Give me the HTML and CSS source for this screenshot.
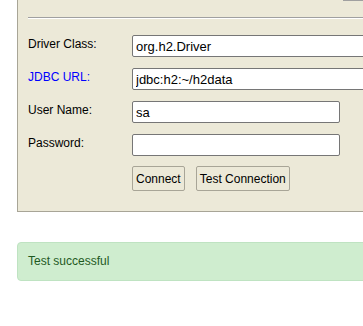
FILE: index.html
```html
<!DOCTYPE html>
<html lang="en">
<head>
    <meta charset="UTF-8">
    <meta name="viewport" content="width=device-width, initial-scale=1.0">
    <title>H2 Console - Login</title>
    <link rel="stylesheet" href="styles.css">
</head>
<body>
    <div class="login-panel">
        <div class="toolbar">
            <button type="button" class="tool-button" aria-label="Help"></button>
        </div>
        <hr class="separator">
        <form class="login-form">
            <label class="field-label">Driver Class:</label>
            <input type="text" class="field-input wide" value="org.h2.Driver">

            <a href="#" class="field-label link">JDBC URL:</a>
            <input type="text" class="field-input wide" value="jdbc:h2:~/h2data">

            <label class="field-label">User Name:</label>
            <input type="text" class="field-input" value="sa">

            <label class="field-label">Password:</label>
            <input type="password" class="field-input" value="">

            <span></span>
            <div class="actions">
                <button type="button" class="form-button">Connect</button>
                <button type="button" class="form-button">Test Connection</button>
            </div>
        </form>
    </div>

    <div class="alert-success">Test successful</div>
</body>
</html>
```

FILE: styles.css
```css
body {
    font-family: "Liberation Sans", Arial, sans-serif;
    font-size: 12px;
    line-height: 14px;
    margin: 0;
    padding: 0;
    background: #ffffff;
    overflow: hidden;
}

/* Login panel */
.login-panel {
    margin: -30px 0 0 17px;
    width: 420px;
    padding: 5px 0 20px 10px;
    background: #ece9d8;
    border: 1px solid #a8a597;
}

.toolbar {
    display: flex;
    height: 25px;
}

    .tool-button {
        margin-left: 315px;
        width: 60px;
        height: 25px;
        border: 1px solid #a0a0a0;
        background: #ece9d8;
    }

.separator {
    margin: 16px 0 16px 0;
    border: none;
    border-top: 1px solid #a0a0a0;
    border-bottom: 1px solid #ffffff;
    height: 0;
}

/* Form */
.login-form {
    display: grid;
    grid-template-columns: 104px auto;
    row-gap: 11px;
    align-items: start;
}

.field-label {
    padding-top: 2px;
    color: #000000;
}

    .field-label.link {
        color: #0000ff;
        text-decoration: none;
    }

.field-input {
    box-sizing: border-box;
    width: 208px;
    height: 22px;
    margin: 0;
    padding: 1px 3px;
    border: 1px solid #767676;
    border-radius: 2px;
    background: #ffffff;
    font: inherit;
    font-size: 13px;
    color: #000000;
}

    .field-input.wide {
        width: 300px;
    }

.actions {
    display: flex;
    gap: 11px;
    margin-top: -1px;
}

.form-button {
    box-sizing: border-box;
    height: 25px;
    margin: 0;
    padding: 0 3px;
    border: 1px solid #a8a597;
    border-radius: 2px;
    background: #ece9d8;
    font: inherit;
    font-size: 12px;
    color: #000000;
}

/* Status message */
.alert-success {
    margin: 30px 0 0 17px;
    width: 420px;
    padding: 11px 10px 12px;
    background: #cfedcf;
    border: 1px solid #bfe3c2;
    border-radius: 4px;
    color: #1f5a1f;
}
```
